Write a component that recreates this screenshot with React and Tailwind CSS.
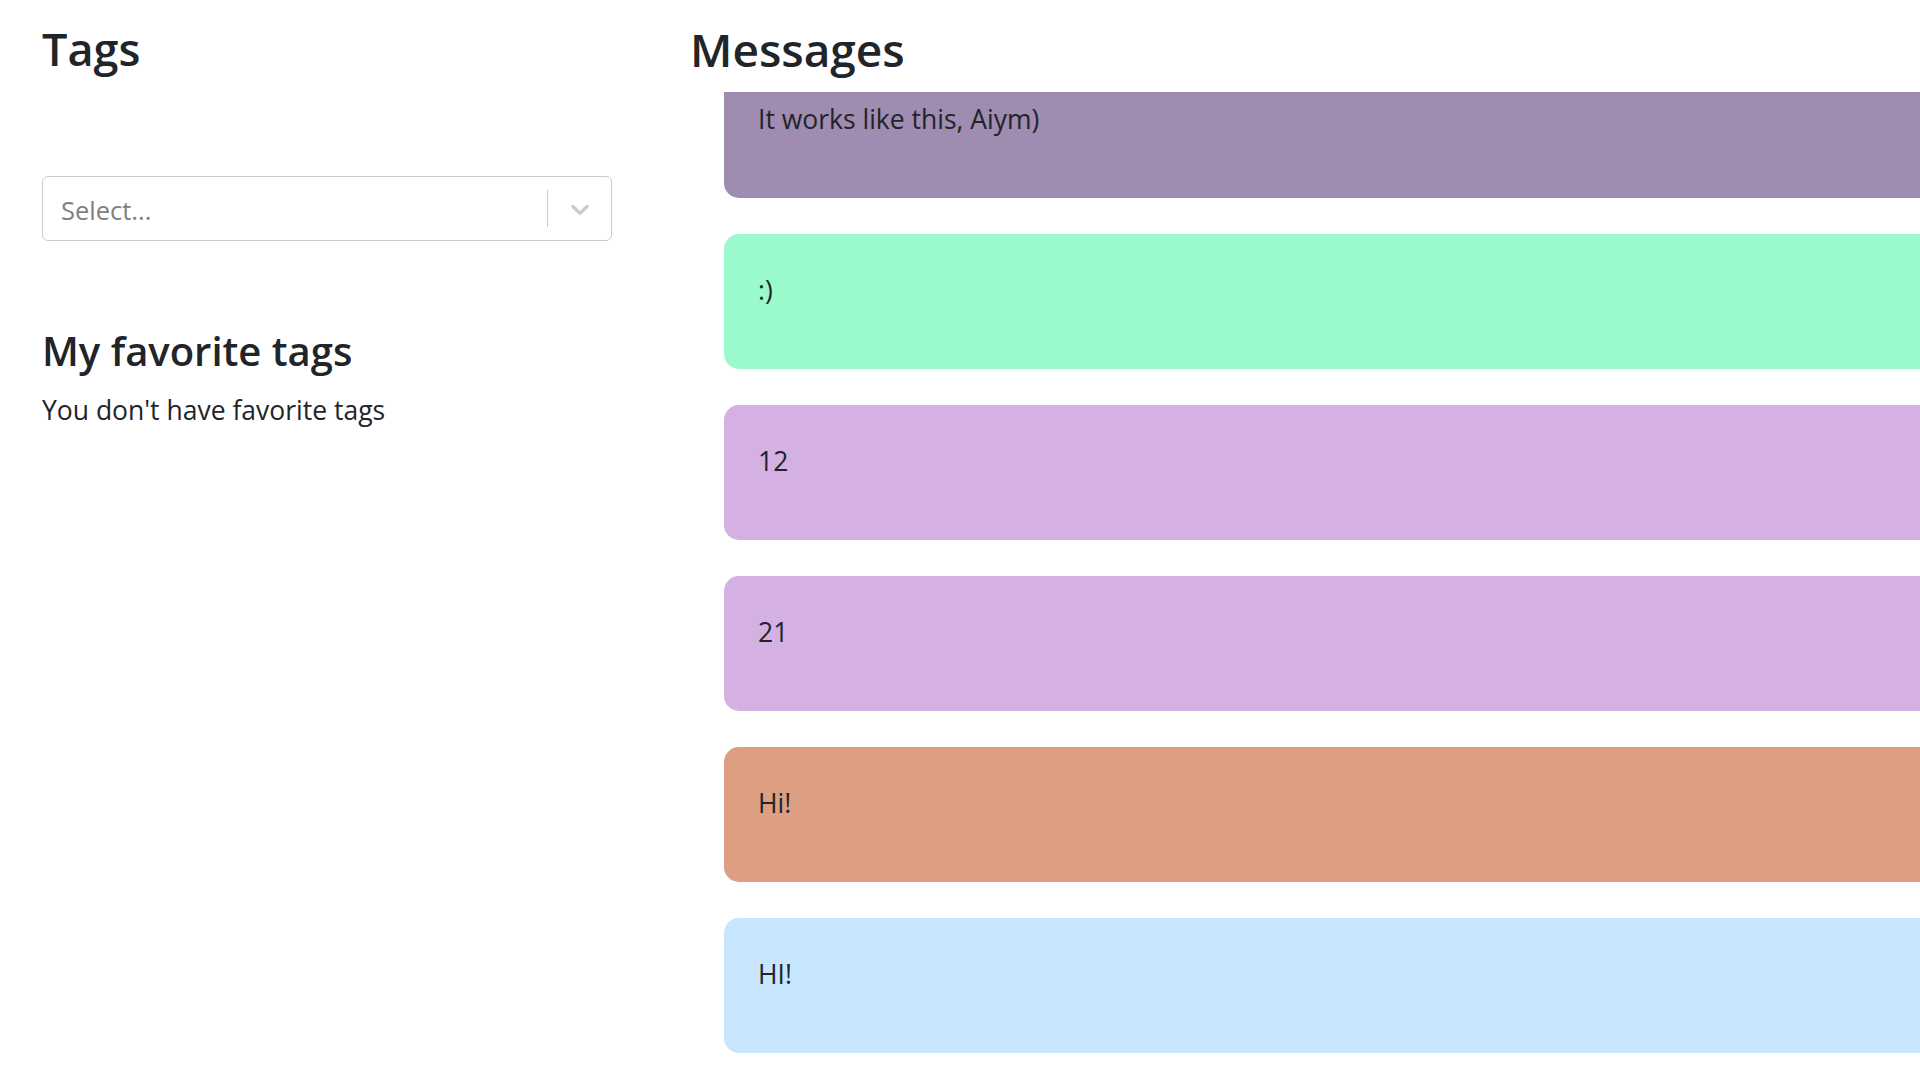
import React from "react";

const messages = [
  { id: 1, text: "It works like this, Aiym)", color: "bg-[#a08bb1]" },
  { id: 2, text: ":)", color: "bg-[#9bfacb]" },
  { id: 3, text: "12", color: "bg-[#d4b0e3]" },
  { id: 4, text: "21", color: "bg-[#d4b0e3]" },
  { id: 5, text: "Hi!", color: "bg-[#dc9f82]" },
  { id: 6, text: "HI!", color: "bg-[#c7e6fd]" },
];

function ChevronDown() {
  return (
    <svg width="30" height="30" viewBox="0 0 20 20" fill="#cccccc" aria-hidden="true">
      <path d="M4.516 7.548c0.436-0.446 1.043-0.481 1.576 0l3.908 3.747 3.908-3.747c0.533-0.481 1.141-0.446 1.574 0 0.436 0.445 0.408 1.197 0 1.615-0.406 0.418-4.695 4.502-4.695 4.502-0.217 0.223-0.502 0.335-0.787 0.335s-0.57-0.112-0.789-0.335c0 0-4.287-4.084-4.695-4.502s-0.436-1.17 0-1.615z" />
    </svg>
  );
}

export default function App() {
  return (
    <div className="flex h-screen w-full overflow-hidden bg-white pl-[42px] font-['Open_Sans',sans-serif] text-[#212529]">
      {/* Tags column */}
      <div className="w-[570px] shrink-0">
        <h2 className="mt-[21px] text-[45px] font-semibold leading-[56px]">Tags</h2>

        <div className="mt-[99px] flex h-[65px] items-center rounded-[6px] border border-[#cccccc] bg-white">
          <div className="flex-1 pl-[18px] pt-[3px] text-[25.5px] leading-[36px] text-[#808080]">
            Select...
          </div>
          <div className="h-[37px] w-px bg-[#cccccc]" />
          <div className="flex items-center pl-[17px] pr-[16px]">
            <ChevronDown />
          </div>
        </div>

        <h3 className="mt-[86px] text-[40px] font-semibold leading-[48px]">My favorite tags</h3>
        <p className="mt-[15px] text-[26.5px] leading-[40px]">You don't have favorite tags</p>
      </div>

      {/* Messages column */}
      <div className="ml-[78px] flex min-w-0 flex-1 flex-col">
        <h2 className="mt-[21px] text-[46px] font-semibold leading-[56px]">Messages</h2>

        <div className="mt-[15px] flex-1 overflow-hidden">
          <div className="-mt-[29.5px] flex flex-col gap-[36px] pl-[34px]">
            {messages.map((m) => (
              <div
                key={m.id}
                className={`h-[135px] w-[1400px] shrink-0 rounded-[15px] pl-[34px] pt-[36px] text-[26.5px] leading-[40px] ${m.color}`}
              >
                {m.text}
              </div>
            ))}
          </div>
        </div>
      </div>
    </div>
  );
}
